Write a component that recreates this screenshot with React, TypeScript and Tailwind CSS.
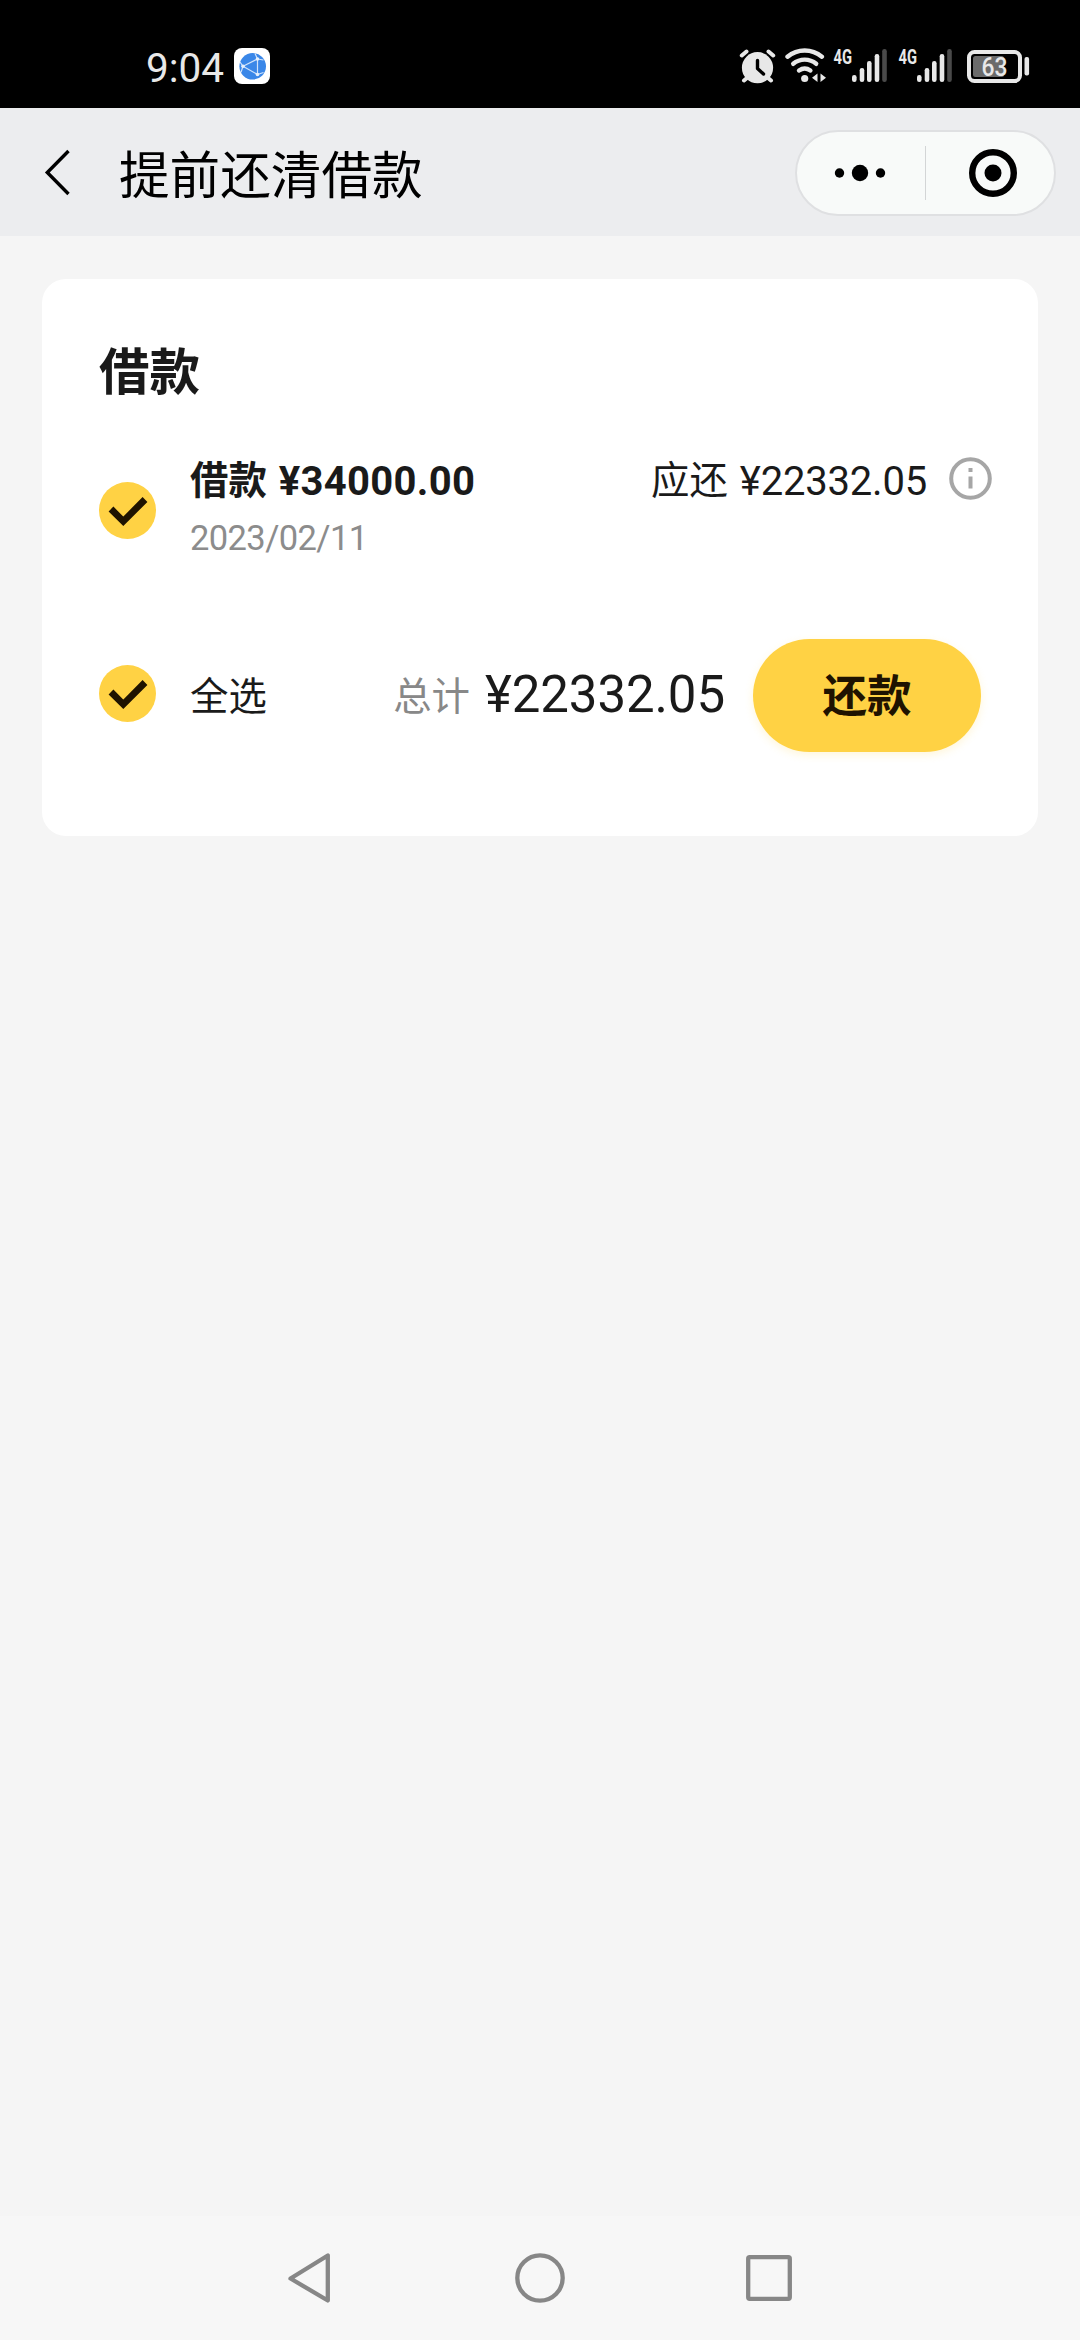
import React from "react";

const BARS = [
  { x: 22, top: 30 },
  { x: 29.7, top: 23 },
  { x: 37, top: 16 },
  { x: 44.7, top: 9 },
];

const Signal: React.FC = () => (
  <svg className="h-10 w-[65px]" viewBox="0 0 65 40" fill="#e8e8e8">
    <text x="1.5" y="19" fontSize="20" fontWeight="700" textLength="18.5" lengthAdjust="spacingAndGlyphs">
      4G
    </text>
    {BARS.map((bar) => (
      <rect key={bar.x} x={bar.x - 2} y={bar.top} width="4.6" height={37 - bar.top} rx="2.2" />
    ))}
    <rect x="50.2" y="4" width="4.6" height="33" rx="2.2" fill="#4a4a4a" />
  </svg>
);

const StatusBar: React.FC = () => (
  <div className="flex h-[108px] items-start bg-black pt-[45px] pl-[146px] font-['Roboto',sans-serif] text-[#e8e8e8]">
    <span className="w-[88px] text-[40.5px] leading-[46px]">9:04</span>
    {/* App icon */}
    <svg className="mt-[3px] h-9 w-9" viewBox="0 0 36 36">
      <rect width="36" height="36" rx="8" fill="#fff" />
      <circle cx="18.7" cy="18.3" r="13.3" fill="#3a87e8" />
      <g stroke="#cfe2fa" strokeWidth="1.2" fill="none">
        <path d="M9 18.3 23.5 11v15.5z" />
        <path d="M9 18.3 6 14M23.5 11 21 5.5M23.5 11l6 1M23.5 26.5l6-2M9 18.3l-2 6" />
      </g>
      <g fill="#e6f0fc">
        <circle cx="9" cy="18.3" r="1.8" />
        <circle cx="23.5" cy="11" r="1.8" />
        <circle cx="23.5" cy="26.5" r="1.8" />
      </g>
    </svg>

    {/* Alarm */}
    <svg className="ml-[468px] h-10 w-10" viewBox="0 0 40 40">
      <g stroke="#e8e8e8" strokeWidth="4" strokeLinecap="round">
        <path d="M3.8 10.5 8.5 6.5M30.5 6.5l4.7 4M9.5 32.5l-3.5 3M29.5 32.5l3.5 3" />
      </g>
      <circle cx="19.5" cy="22.7" r="15.6" fill="#e8e8e8" />
      <path d="M19.5 15.5v8l6 5.5" stroke="#000" strokeWidth="3.4" strokeLinecap="round" strokeLinejoin="round" fill="none" />
    </svg>

    {/* Wifi */}
    <svg className="ml-[7px] h-10 w-[47px]" viewBox="0 0 47 40">
      <g stroke="#e8e8e8" strokeWidth="4.4" strokeLinecap="round" fill="none">
        <path d="M2.5 11.7a27 27 0 0 1 34.4 0" />
        <path d="M8.2 18.8a18 18 0 0 1 23 0" />
        <path d="M14 25.5a10 10 0 0 1 11.4 0" />
      </g>
      <circle cx="19.7" cy="33.5" r="3.6" fill="#e8e8e8" />
      <path d="M32.5 28.5V37L27 32.8zM35.5 28.5V37l5.5-4.2z" fill="#e8e8e8" />
    </svg>

    <Signal />
    <Signal />

    {/* Battery */}
    <svg className="h-10 w-[68px]" viewBox="0 0 68 40">
      <rect x="7" y="7" width="51" height="29" rx="5.5" fill="none" stroke="#e8e8e8" strokeWidth="4" />
      <rect x="11" y="11" width="31" height="21" rx="2.5" fill="#6b6b6b" />
      <rect x="62.5" y="12" width="4.6" height="18.5" rx="2" fill="#e8e8e8" />
      <text x="19.5" y="31" fontSize="25.5" fontWeight="500" textLength="26" lengthAdjust="spacingAndGlyphs" fill="#e8e8e8">
        63
      </text>
    </svg>
  </div>
);

const Header: React.FC = () => (
  <div className="flex h-32 items-center bg-[#ecedef] pr-6 pl-[42px]">
    <svg className="h-12 w-8" viewBox="0 0 32 48" fill="none" stroke="#000" strokeWidth="3.4">
      <path d="M26.5 3 5.3 24.5 26.5 46" />
    </svg>
    <h1 className="ml-[45px] text-[50.6px] leading-[64px] text-black">提前还清借款</h1>
    <div className="mt-0.5 ml-auto flex h-[86px] w-[261px] items-center rounded-full border-2 border-[#dfe0e2] bg-[#f8faf9]">
      <svg className="h-5 w-[128px]" viewBox="0 0 128 20">
        <circle cx="42.5" cy="10" r="4.7" />
        <circle cx="63" cy="10" r="8.2" />
        <circle cx="83.500" cy="10" r="4.7" />
      </svg>
      <div className="h-[54px] w-px bg-[#d3d5d6]" />
      <svg className="ml-[42px] h-[50px] w-[50px]" viewBox="0 0 50 50">
        <circle cx="25" cy="25" r="20.8" fill="none" stroke="#000" strokeWidth="6.4" />
        <circle cx="25" cy="25" r="8.5" />
      </svg>
    </div>
  </div>
);

const CheckMark: React.FC = () => (
  <svg className="h-[57px] w-[57px] shrink-0" viewBox="0 0 57 57">
    <circle cx="28.5" cy="28.5" r="28.5" fill="#ffd244" />
    <path d="M12 27 24.3 39.3 46 17.5" fill="none" stroke="#1f1300" strokeWidth="6.8" />
  </svg>
);

const LoanCard: React.FC = () => (
  <div className="mx-[42px] mt-[43px] h-[557px] rounded-[24px] bg-white pt-[57px] pr-[46px] pl-[57px] text-[#1a1a1a]">
    <h2 className="text-[50.5px] leading-[64px] font-bold">借款</h2>

    {/* Loan row */}
    <div className="mt-[51px] flex h-[112px] items-start">
      <div className="mt-[31px] flex">
        <CheckMark />
      </div>
      <div className="ml-[34px]">
        <p className="flex h-[60px] items-center font-bold">
          <span className="pb-[7px] text-[38.4px]">借款</span>
          <span className="ml-3 pt-px font-['Roboto',sans-serif] text-[40px] tracking-[0.3px]">¥34000.00</span>
        </p>
        <p className="pt-px font-['Roboto',sans-serif] text-[34.5px] leading-[52px] tracking-[-0.6px] text-[#8c8c8c]">2023/02/11</p>
      </div>
      <p className="ml-auto flex h-[60px] items-center">
        <span className="pb-[7px] text-[38.4px]">应还</span>
        <span className="ml-3 pt-px font-['Roboto',sans-serif] text-[40px] tracking-[-0.2px]">¥22332.05</span>
      </p>
      <svg className="mt-[6px] ml-[22px] h-[43px] w-[43px]" viewBox="0 0 43 43">
        <circle cx="21.5" cy="21.5" r="19.3" fill="none" stroke="#a6a6a6" strokeWidth="4" />
        <path d="M19.5 11h4v4h-4zM19.5 19.5h4v12h-4z" fill="#a6a6a6" />
      </svg>
    </div>

    {/* Total row */}
    <div className="mt-[75px] flex h-[114px] items-center pr-[11px]">
      <div className="mb-[4px] flex">
        <CheckMark />
      </div>
      <span className="ml-[34px] pb-[3px] text-[38.4px]">全选</span>
      <span className="ml-auto pb-[3px] text-[38.4px] text-[#888]">总计</span>
      <span className="ml-[15px] font-['Roboto',sans-serif] text-[51px] tracking-[-0.1px]">¥22332.05</span>
      <button
        type="button"
        className="ml-[28px] h-[113px] w-[228px] rounded-full bg-[#ffd244] pb-1 text-[44.5px] font-bold text-[#1f1300] shadow-[0_3px_8px_rgba(255,210,68,0.2)]"
      >
        还款
      </button>
    </div>
  </div>
);

const NavBar: React.FC = () => (
  <div className="mt-auto flex h-[124px] items-center bg-[#f7f7f7] pl-[286px]">
    <svg className="mb-px h-[54px] w-[508px]" viewBox="0 0 508 54" fill="none" stroke="#878787" strokeWidth="4.3" strokeLinejoin="round">
      <path d="M4.5 27.500 41.8 4.500v45z" />
      <circle cx="254" cy="27" r="22.7" />
      <rect x="462.2" y="6.2" width="41.6" height="41.6" rx="1.5" />
    </svg>
  </div>
);

const App: React.FC = () => {
  return (
    <div className="flex h-[2340px] w-[1080px] flex-col bg-[#f5f5f5] font-['Noto_Sans_CJK_SC',sans-serif]">
      <StatusBar />
      <Header />
      <LoanCard />
      <NavBar />
    </div>
  );
};

export default App;
